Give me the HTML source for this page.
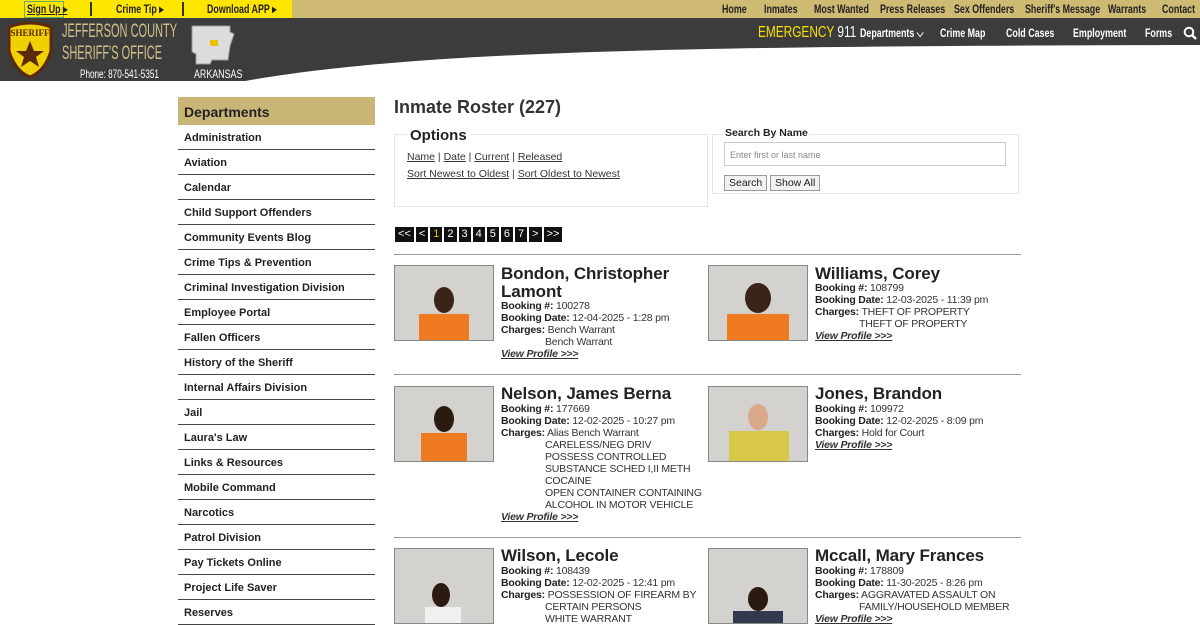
<!DOCTYPE html>
<html><head><meta charset="utf-8"><style>
*{margin:0;padding:0;box-sizing:border-box}
body{width:1200px;height:620px;overflow:hidden;background:#fff;font-family:"Liberation Sans",sans-serif;color:#222;position:relative}
.n{font-family:"Liberation Sans",sans-serif;font-weight:bold;transform:scaleX(.74);transform-origin:left top}
.a{position:absolute}
#top{left:0;top:0;width:1200px;height:18px;background:#cfba74}
#yel{left:0;top:0;width:292px;height:18px;background:#ffe600}
.tl{font-size:12px;color:#222;top:2px;white-space:nowrap}
#dark{left:0;top:18px;width:1200px;height:63px;background:#3c3c3c;overflow:hidden}
.nav{font-size:12px;color:#fff;top:26px;white-space:nowrap}
.side{left:178px;width:197px}
.side div{height:25px;border-bottom:1px solid #444;font-size:11px;font-weight:bold;padding:7px 6px 0;color:#222}
.nm{font-size:17px;font-weight:bold;color:#222;line-height:18px;letter-spacing:-.1px}
.inf{font-size:10.5px;line-height:12px;color:#333;letter-spacing:-.2px;white-space:nowrap}
.inf b{color:#222}
.inf u{font-style:italic;font-weight:bold}
.ph{width:100px;height:76px;border:1px solid #888;background:#d4d2cf;overflow:hidden}
.pg span{display:inline-block;background:#111;color:#fff;font-size:11px;height:15px;line-height:15px;padding:0 3px;margin-right:2px}
hr.s{position:absolute;left:394px;width:627px;border:0;border-top:1px solid #999}
</style></head><body>
<div class="a" id="top"></div><div class="a" id="yel"></div>
<div class="a" style="left:24px;top:1px;width:40px;height:17px;border:1px solid #6a6"></div>
<div class="a n tl" style="left:27px;text-decoration:underline">Sign Up ▸</div>
<div class="a" style="left:90px;top:2px;width:2px;height:14px;background:#333"></div>
<div class="a n tl" style="left:116px">Crime Tip ▸</div>
<div class="a" style="left:182px;top:2px;width:2px;height:14px;background:#333"></div>
<div class="a n tl" style="left:207px">Download APP ▸</div>
<div class="a n tl" style="left:722px">Home</div>
<div class="a n tl" style="left:764px">Inmates</div>
<div class="a n tl" style="left:814px">Most Wanted</div>
<div class="a n tl" style="left:880px">Press Releases</div>
<div class="a n tl" style="left:954px">Sex Offenders</div>
<div class="a n tl" style="left:1025px">Sheriff's Message</div>
<div class="a n tl" style="left:1108px">Warrants</div>
<div class="a n tl" style="left:1162px">Contact</div>
<div class="a" id="dark">
<svg width="1200" height="63" style="position:absolute;left:0;top:0"><path d="M245 63 C420 32 700 28 1200 27 L1200 63 Z" fill="#fff"/></svg>
</div>
<svg class="a" style="left:5px;top:21px" width="50" height="58"><path d="M4 6 Q25 -2 46 6 L46 30 Q40 50 25 56 Q10 50 4 30Z" fill="#f0d000" stroke="#5a2a0a" stroke-width="3"/><text x="25" y="15" font-size="9" font-weight="bold" text-anchor="middle" fill="#5a2a0a" font-family="Liberation Serif">SHERIFF</text><path d="M25 20 L29 30 L39 30 L31 36 L34 46 L25 40 L16 46 L19 36 L11 30 L21 30Z" fill="#5a2a0a"/></svg>
<div class="a n" style="left:62px;top:21px;font-size:19px;color:#d2c08a;font-weight:normal;line-height:22px;white-space:nowrap;transform:scaleX(.58)">JEFFERSON COUNTY<br>SHERIFF'S OFFICE</div>
<div class="a n" style="left:80px;top:67px;font-size:12px;color:#fff;font-weight:normal;white-space:nowrap;transform:scaleX(.68)">Phone: 870-541-5351</div>
<svg class="a" style="left:190px;top:24px" width="46" height="42"><path d="M2 2 L40 2 L40 8 L44 10 L40 22 L38 36 L22 36 L20 40 L6 40 L6 30 L2 28Z" fill="#ddd" stroke="#999"/><rect x="20" y="16" width="8" height="6" fill="#e8c000"/></svg>
<div class="a n" style="left:194px;top:67px;font-size:12px;color:#fff;font-weight:normal">ARKANSAS</div>
<div class="a n nav" style="left:758px;font-size:16px;top:24px;font-weight:normal"><span style="color:#f5e000">EMERGENCY</span> 911</div>
<div class="a n nav" style="left:860px">Departments ⌵</div>
<div class="a n nav" style="left:940px">Crime Map</div>
<div class="a n nav" style="left:1006px">Cold Cases</div>
<div class="a n nav" style="left:1073px">Employment</div>
<div class="a n nav" style="left:1145px">Forms</div>
<svg class="a" style="left:1183px;top:26px" width="14" height="14"><circle cx="6" cy="6" r="4.3" fill="none" stroke="#fff" stroke-width="2"/><path d="M9 9 L13 13" stroke="#fff" stroke-width="2.5"/></svg>

<div class="a" style="left:178px;top:97px;width:197px;height:28px;background:#c9b677;font-weight:bold;font-size:14px;padding:7px 6px">Departments</div>
<div class="a side" style="top:125px">
<div>Administration</div><div>Aviation</div><div>Calendar</div><div>Child Support Offenders</div><div>Community Events Blog</div><div>Crime Tips &amp; Prevention</div><div>Criminal Investigation Division</div><div>Employee Portal</div><div>Fallen Officers</div><div>History of the Sheriff</div><div>Internal Affairs Division</div><div>Jail</div><div>Laura's Law</div><div>Links &amp; Resources</div><div>Mobile Command</div><div>Narcotics</div><div>Patrol Division</div><div>Pay Tickets Online</div><div>Project Life Saver</div><div>Reserves</div>
</div>

<div class="a" style="left:394px;top:97px;font-size:18px;font-weight:bold;color:#333">Inmate Roster (227)</div>
<div class="a" style="left:394px;top:134px;width:314px;height:73px;border:1px solid #e4e4e4"></div>
<div class="a" style="left:406px;top:127px;background:#fff;padding:0 4px;font-size:15px;font-weight:bold">Options</div>
<div class="a" style="left:407px;top:149px;font-size:10.5px;line-height:17px;color:#333"><u>Name</u> | <u>Date</u> | <u>Current</u> | <u>Released</u><br><u>Sort Newest to Oldest</u> | <u>Sort Oldest to Newest</u></div>
<div class="a" style="left:712px;top:134px;width:307px;height:60px;border:1px solid #e4e4e4"></div>
<div class="a" style="left:723px;top:127px;background:#fff;font-size:10.5px;font-weight:bold;padding:0 2px">Search By Name</div>
<div class="a" style="left:724px;top:142px;width:282px;height:24px;border:1px solid #ccc;font-size:9px;color:#888;padding:7px 5px">Enter first or last name</div>
<div class="a" style="left:724px;top:175px;height:16px;border:1px solid #999;background:#f2f2f2;font-size:10.5px;padding:1px 4px">Search</div>
<div class="a" style="left:770px;top:175px;height:16px;border:1px solid #999;background:#f2f2f2;font-size:10.5px;padding:1px 4px">Show All</div>
<div class="a pg" style="left:395px;top:224px"><span>&lt;&lt;</span><span>&lt;</span><span style="color:#e8c000">1</span><span>2</span><span>3</span><span>4</span><span>5</span><span>6</span><span>7</span><span>&gt;</span><span>&gt;&gt;</span></div>

<hr class="s" style="top:254px"><hr class="s" style="top:374px"><hr class="s" style="top:537px">

<div class="a ph" style="left:394px;top:265px"><svg width="100" height="76"><rect x="24" y="48" width="50" height="30" fill="#f07a20"/><ellipse cx="49" cy="34" rx="10" ry="13" fill="#3a2418"/></svg></div>
<div class="a nm" style="left:501px;top:265px">Bondon, Christopher<br>Lamont</div>
<div class="a inf" style="left:501px;top:300px"><b>Booking #:</b> 100278<br><b>Booking Date:</b> 12-04-2025 - 1:28 pm<br><b>Charges:</b> Bench Warrant<br><span style="margin-left:44px">Bench Warrant</span><br><u>View Profile &gt;&gt;&gt;</u></div>

<div class="a ph" style="left:708px;top:265px"><svg width="100" height="76"><rect x="18" y="48" width="62" height="30" fill="#f07a20"/><ellipse cx="49" cy="32" rx="13" ry="15" fill="#3a2418"/></svg></div>
<div class="a nm" style="left:815px;top:265px">Williams, Corey</div>
<div class="a inf" style="left:815px;top:282px"><b>Booking #:</b> 108799<br><b>Booking Date:</b> 12-03-2025 - 11:39 pm<br><b>Charges:</b> THEFT OF PROPERTY<br><span style="margin-left:44px">THEFT OF PROPERTY</span><br><u>View Profile &gt;&gt;&gt;</u></div>

<div class="a ph" style="left:394px;top:386px"><svg width="100" height="76"><rect x="26" y="46" width="46" height="30" fill="#f07a20"/><ellipse cx="49" cy="32" rx="10" ry="13" fill="#2a1a10"/></svg></div>
<div class="a nm" style="left:501px;top:385px">Nelson, James Berna</div>
<div class="a inf" style="left:501px;top:403px"><b>Booking #:</b> 177669<br><b>Booking Date:</b> 12-02-2025 - 10:27 pm<br><b>Charges:</b> Alias Bench Warrant<div style="margin-left:44px">CARELESS/NEG DRIV<br>POSSESS CONTROLLED<br>SUBSTANCE SCHED I,II METH<br>COCAINE<br>OPEN CONTAINER CONTAINING<br>ALCOHOL IN MOTOR VEHICLE</div><u>View Profile &gt;&gt;&gt;</u></div>

<div class="a ph" style="left:708px;top:386px"><svg width="100" height="76"><rect x="20" y="44" width="60" height="32" fill="#d8c84a"/><ellipse cx="49" cy="30" rx="10" ry="13" fill="#d9a98a"/></svg></div>
<div class="a nm" style="left:815px;top:385px">Jones, Brandon</div>
<div class="a inf" style="left:815px;top:403px"><b>Booking #:</b> 109972<br><b>Booking Date:</b> 12-02-2025 - 8:09 pm<br><b>Charges:</b> Hold for Court<br><u>View Profile &gt;&gt;&gt;</u></div>

<div class="a ph" style="left:394px;top:548px"><svg width="100" height="76"><rect x="30" y="58" width="36" height="20" fill="#f0f0f0"/><ellipse cx="46" cy="46" rx="9" ry="12" fill="#2a1a10"/></svg></div>
<div class="a nm" style="left:501px;top:547px">Wilson, Lecole</div>
<div class="a inf" style="left:501px;top:565px"><b>Booking #:</b> 108439<br><b>Booking Date:</b> 12-02-2025 - 12:41 pm<br><b>Charges:</b> POSSESSION OF FIREARM BY<div style="margin-left:44px">CERTAIN PERSONS<br>WHITE WARRANT</div></div>

<div class="a ph" style="left:708px;top:548px"><svg width="100" height="76"><rect x="24" y="62" width="50" height="16" fill="#333a50"/><ellipse cx="49" cy="50" rx="10" ry="12" fill="#2a1a10"/></svg></div>
<div class="a nm" style="left:815px;top:547px">Mccall, Mary Frances</div>
<div class="a inf" style="left:815px;top:565px"><b>Booking #:</b> 178809<br><b>Booking Date:</b> 11-30-2025 - 8:26 pm<br><b>Charges:</b> AGGRAVATED ASSAULT ON<div style="margin-left:44px">FAMILY/HOUSEHOLD MEMBER</div><u>View Profile &gt;&gt;&gt;</u></div>
</body></html>
